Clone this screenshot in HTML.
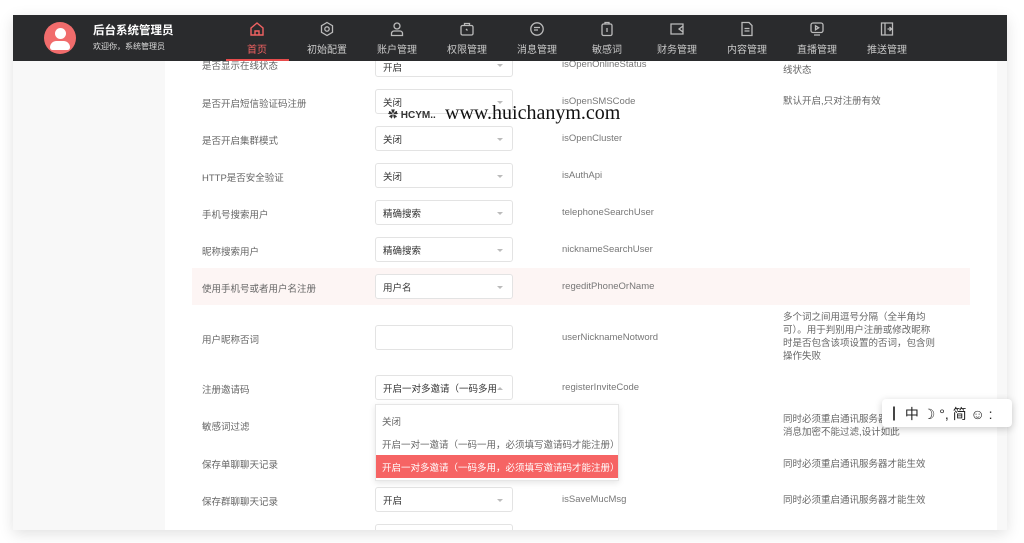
<!DOCTYPE html>
<html><head><meta charset="utf-8"><style>
*{margin:0;padding:0;box-sizing:border-box}
body{width:1024px;height:543px;background:#fff;position:relative;overflow:hidden;font-family:"Liberation Sans","Noto Sans CJK SC",sans-serif;}
.a{position:absolute;white-space:nowrap}
.frame{position:absolute;left:13px;top:15px;width:994px;height:515px;background:#f8f8f8;box-shadow:0 4px 14px rgba(0,0,0,.12);overflow:hidden}
.content{position:absolute;left:152px;top:0;width:832px;height:515px;background:#fff}
.hdr{position:absolute;left:13px;top:15px;width:994px;height:46px;background:#2a2b2d;z-index:5}
.nav{position:absolute;top:0;width:70px;height:46px;text-align:center;color:#c8c8c8;font-size:10px}
.nav svg{position:absolute;left:27px;top:6px}
.nav span{position:absolute;left:0;right:0;top:26px}
.lbl{font-size:9.5px;color:#666}
.key{font-size:9.5px;color:#777}
.desc{font-size:9.5px;color:#666;line-height:13px}
.sel{position:absolute;left:375px;width:138px;height:25px;border:1px solid #e3e3e3;border-radius:3px;background:#fff;font-size:9.5px;color:#333;padding:5px 0 0 7px;white-space:nowrap}
.sel:after{content:"";position:absolute;right:9px;top:11px;border:3px solid transparent;border-top:3px solid #bbb}
.up:after{top:8px;border-top-color:transparent;border-bottom:3px solid #bbb}
.noarr:after{display:none}
</style></head><body>
<div class="frame"><div class="content"></div></div>
<div class="a" style="left:192px;top:268px;width:778px;height:37px;background:#fdf5f4"></div>

<div class="hdr">
  <div class="a" style="left:31px;top:7px;width:32px;height:32px;border-radius:50%;background:#f16c6c;overflow:hidden">
    <div class="a" style="left:11px;top:6px;width:11px;height:11px;border-radius:50%;background:#fff"></div>
    <div class="a" style="left:6px;top:19px;width:20px;height:9px;border-radius:10px 10px 4px 4px;background:#fff"></div>
  </div>
  <div class="a" style="left:80px;top:7px;color:#fff;font-size:11.5px;font-weight:bold">后台系统管理员</div>
  <div class="a" style="left:80px;top:26px;color:#ddd;font-size:8px">欢迎你，系统管理员</div>
  <div class="nav" style="left:209px;color:#f06262"><svg width="16" height="16" viewBox="0 0 16 16" fill="none" stroke="#f06262" stroke-width="1.4"><path d="M2 7L8 2l6 5v7H2z M6 14v-4h4v4"/></svg><span>首页</span></div>
  <div class="a" style="left:213px;top:44px;width:63px;height:2px;background:#e84c4c"></div>
  <div class="nav" style="left:279px"><svg width="16" height="16" viewBox="0 0 16 16" fill="none" stroke="#bbb" stroke-width="1.3"><path d="M8 1.5l5.5 3.2v6.6L8 14.5l-5.5-3.2V4.7z"/><circle cx="8" cy="8" r="2.2"/></svg><span>初始配置</span></div>
  <div class="nav" style="left:349px"><svg width="16" height="16" viewBox="0 0 16 16" fill="none" stroke="#bbb" stroke-width="1.3"><circle cx="8" cy="5" r="3"/><path d="M2.5 14.5v-2a2.5 2.5 0 0 1 2.5-2.5h6a2.5 2.5 0 0 1 2.5 2.5v2z"/></svg><span>账户管理</span></div>
  <div class="nav" style="left:419px"><svg width="16" height="16" viewBox="0 0 16 16" fill="none" stroke="#bbb" stroke-width="1.3"><rect x="2" y="4.5" width="12" height="9.5" rx="1.5"/><path d="M5.5 4.5V2.5h5v2M7 8l1.5 1.5"/></svg><span>权限管理</span></div>
  <div class="nav" style="left:489px"><svg width="16" height="16" viewBox="0 0 16 16" fill="none" stroke="#bbb" stroke-width="1.3"><circle cx="8" cy="8" r="6.2"/><path d="M5 6.5h6M5 9h4"/></svg><span>消息管理</span></div>
  <div class="nav" style="left:559px"><svg width="16" height="16" viewBox="0 0 16 16" fill="none" stroke="#bbb" stroke-width="1.3"><rect x="3" y="3" width="10" height="11.5" rx="1.5"/><path d="M6 3V1.5h4V3M8 7v4"/></svg><span>敏感词</span></div>
  <div class="nav" style="left:629px"><svg width="16" height="16" viewBox="0 0 16 16" fill="none" stroke="#bbb" stroke-width="1.3"><path d="M2 3h12v10H2z M14 5l-4 3 4 3"/></svg><span>财务管理</span></div>
  <div class="nav" style="left:699px"><svg width="16" height="16" viewBox="0 0 16 16" fill="none" stroke="#bbb" stroke-width="1.3"><path d="M3 1.5h7l3 3v10H3z M5.5 7.5h5M5.5 10h5"/></svg><span>内容管理</span></div>
  <div class="nav" style="left:769px"><svg width="16" height="16" viewBox="0 0 16 16" fill="none" stroke="#bbb" stroke-width="1.3"><rect x="2" y="2" width="12" height="9.5" rx="2"/><path d="M6.5 4.8v4l3.2-2z M5 14h6"/></svg><span>直播管理</span></div>
  <div class="nav" style="left:839px"><svg width="16" height="16" viewBox="0 0 16 16" fill="none" stroke="#bbb" stroke-width="1.3"><path d="M2.5 2h11v12h-11z M6 2v12 M8.5 8h4 M10.5 6l2 2-2 2"/></svg><span>推送管理</span></div>
</div>

<div class="a lbl" style="left:202px;top:58px">是否显示在线状态</div><div class="sel" style="top:52px;padding-top:7px">开启</div><div class="a key" style="left:562px;top:59px">isOpenOnlineStatus</div><div class="a desc" style="left:783px;top:64px">线状态</div>
<div class="a lbl" style="left:202px;top:96px">是否开启短信验证码注册</div><div class="sel" style="top:89px">关闭</div><div class="a key" style="left:562px;top:96px">isOpenSMSCode</div><div class="a desc" style="left:783px;top:95px">默认开启,只对注册有效</div>
<div class="a lbl" style="left:202px;top:133px">是否开启集群模式</div><div class="sel" style="top:126px">关闭</div><div class="a key" style="left:562px;top:133px">isOpenCluster</div>
<div class="a lbl" style="left:202px;top:170px">HTTP是否安全验证</div><div class="sel" style="top:163px">关闭</div><div class="a key" style="left:562px;top:170px">isAuthApi</div>
<div class="a lbl" style="left:202px;top:207px">手机号搜索用户</div><div class="sel" style="top:200px">精确搜索</div><div class="a key" style="left:562px;top:207px">telephoneSearchUser</div>
<div class="a lbl" style="left:202px;top:244px">昵称搜索用户</div><div class="sel" style="top:237px">精确搜索</div><div class="a key" style="left:562px;top:244px">nicknameSearchUser</div>
<div class="a lbl" style="left:202px;top:281px">使用手机号或者用户名注册</div><div class="sel" style="top:274px">用户名</div><div class="a key" style="left:562px;top:281px">regeditPhoneOrName</div>
<div class="a lbl" style="left:202px;top:332px">用户昵称否词</div><div class="sel noarr" style="top:325px"></div><div class="a key" style="left:562px;top:332px">userNicknameNotword</div>
<div class="a desc" style="left:783px;top:311px">多个词之间用逗号分隔（全半角均<br>可）。用于判别用户注册或修改昵称<br>时是否包含该项设置的否词，包含则<br>操作失败</div>
<div class="a lbl" style="left:202px;top:382px">注册邀请码</div><div class="sel up" style="top:375px">开启一对多邀请（一码多用</div><div class="a key" style="left:562px;top:382px">registerInviteCode</div>
<div class="a lbl" style="left:202px;top:419px">敏感词过滤</div><div class="a desc" style="left:783px;top:413px">同时必须重启通讯服务器<br>消息加密不能过滤,设计如此</div>
<div class="a lbl" style="left:202px;top:457px">保存单聊聊天记录</div><div class="a desc" style="left:783px;top:458px">同时必须重启通讯服务器才能生效</div>
<div class="a lbl" style="left:202px;top:494px">保存群聊聊天记录</div><div class="sel" style="top:487px">开启</div><div class="a key" style="left:562px;top:494px">isSaveMucMsg</div><div class="a desc" style="left:783px;top:494px">同时必须重启通讯服务器才能生效</div>
<div class="sel noarr" style="top:524px;height:6px;border-bottom:none;border-radius:3px 3px 0 0"></div>

<div class="a" style="left:375px;top:404px;width:244px;height:77px;background:#fff;border:1px solid #e6e6e6;box-shadow:0 2px 6px rgba(0,0,0,.1);font-size:9.5px;color:#666">
  <div class="a" style="left:6px;top:9px">关闭</div>
  <div class="a" style="left:6px;top:32px">开启一对一邀请（一码一用，必须填写邀请码才能注册）</div>
  <div class="a" style="left:0;top:50px;width:242px;height:23px;background:#f66464;color:#fff;padding:5px 6px">开启一对多邀请（一码多用，必须填写邀请码才能注册）</div>
</div>

<div class="a" style="left:882px;top:399px;width:130px;height:28px;background:#fff;border-radius:4px;box-shadow:0 2px 8px rgba(0,0,0,.2);font-size:14px;color:#222;padding:5px 0 0 5px">┃ 中 ☽ °, 简 ☺ :</div>

<div class="a" style="left:388px;top:106px;font-size:10px;font-weight:bold;color:#333">&#10047; HCYM..</div>
<div class="a" style="left:445px;top:102px;font-size:20px;color:#111;font-family:'Liberation Serif',serif">www.huichanym.com</div>
</body></html>
